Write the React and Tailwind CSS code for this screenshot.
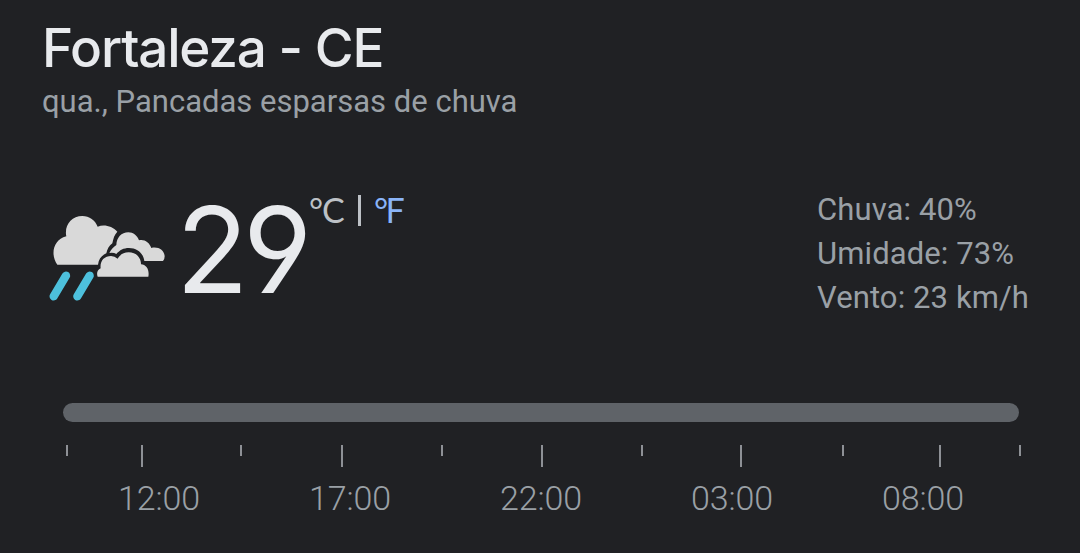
import React from 'react';

const stats = ['Chuva: 40%', 'Umidade: 73%', 'Vento: 23 km/h'];

const ticks = [
    { width: 'w-[75px]', height: 'h-[11px]' },
    { width: 'w-[99px]', height: 'h-[22px]' },
    { width: 'w-[101px]', height: 'h-[11px]' },
    { width: 'w-[100px]', height: 'h-[22px]' },
    { width: 'w-[100px]', height: 'h-[11px]' },
    { width: 'w-[100px]', height: 'h-[22px]' },
    { width: 'w-[99px]', height: 'h-[11px]' },
    { width: 'w-[102px]', height: 'h-[22px]' },
    { width: 'w-[97px]', height: 'h-[11px]' },
    { width: 'w-[80px]', height: 'h-[22px]' },
    { width: 'w-[2px]', height: 'h-[11px]' },
];

const hours = ['12:00', '17:00', '22:00', '03:00', '08:00'];

const App = () => {
    return (
        <div className="h-[553px] w-[1080px] overflow-hidden bg-[#202124] font-['Roboto',sans-serif] text-[#9aa0a6]">
            {/* Location */}
            <header className="h-[187px] pt-[14px] pl-[42px]">
                <h1 className="h-[67px] font-['Inter',sans-serif] text-[53px] leading-[68px] font-medium tracking-[-1.2px] whitespace-nowrap text-[#e8eaed]">
                    Fortaleza - CE
                </h1>
                <p className="text-[31px] leading-[42px] whitespace-nowrap">qua., Pancadas esparsas de chuva</p>
            </header>

            {/* Current weather */}
            <main className="flex h-[216px] pl-[40px]">
                <RainIcon />
                <div className="-ml-1 w-[133px] font-['Inter',sans-serif] text-[119px] leading-[126px] tracking-[-5.5px] text-[#e8eaed] [font-feature-settings:'cv04']">29</div>
                <div className="flex h-[46px] w-[508px] font-['Lato',sans-serif] text-[34px] leading-[46px] text-[#bdc1c6]">
                    <span className="w-[49px] tracking-[-1px]">°C</span>
                    <span className="mt-[8px] h-[31px] w-[3px] bg-[#bdc1c6]" />
                    <span className="ml-[13px] tracking-[-2.5px] text-[#8ab4f8]">°F</span>
                </div>
                <ul className="pt-px">
                    {stats.map((stat) => (
                        <li key={stat} className="text-[31px] leading-[44px] tracking-[0.1px] whitespace-nowrap">{stat}</li>
                    ))}
                </ul>
            </main>

            {/* Timeline */}
            <footer>
                <div className="ml-[63px] h-[19px] w-[956px] rounded-full bg-[#5f6368]" />
                <div className="mt-[23px] ml-[66px] flex h-[33px]">
                    {ticks.map((tick, i) => (
                        <div key={i} className={`shrink-0 ${tick.width}`}>
                            <div className={`w-[2px] bg-[#8e9196] ${tick.height}`} />
                        </div>
                    ))}
                </div>
                <div className="ml-[118px] flex">
                    {hours.map((hour) => (
                        <span key={hour} className="w-[191px] text-[34px] leading-[40px] font-light tracking-[-0.1px]">{hour}</span>
                    ))}
                </div>
            </footer>
        </div>
    );
};

const RainIcon = () => (
    <svg className="mt-[3px] h-[120px] w-[140px] shrink-0" viewBox="0 0 420 360">
        <path
            d="M52 224C31 195 38 150 79 139C72 107 94 78 127 78C148 78 166 91 173 110C193 102 217 109 232 125C223 134 220 145 217 160C207 167 202 178 199 190C184 196 176 208 174 224Z"
            fill="#d9d9d9"
        />
        <path
            d="M208 189C214 178 219 172 229 165C230 143 244 127 265 127C280 127 292 137 297 151C313 147 328 157 334 174C355 169 373 181 374 199Q374 208 369 213H313C310 190 292 174 267 174C250 174 240 180 229 192Q221 187 208 189Z"
            fill="#d9d9d9"
        />
        <path
            d="M173 260C169 250 172 240 182 235C179 213 193 198 213 198Q224 198 233 206C240 194 251 187 266 187C287 187 303 201 303 223C319 224 329 239 325 260Z"
            fill="#d9d9d9"
        />
        <path d="M78 257L41 319M149 257L112 319" stroke="#4dc0dc" strokeWidth="25" strokeLinecap="round" />
    </svg>
);

export default App;
